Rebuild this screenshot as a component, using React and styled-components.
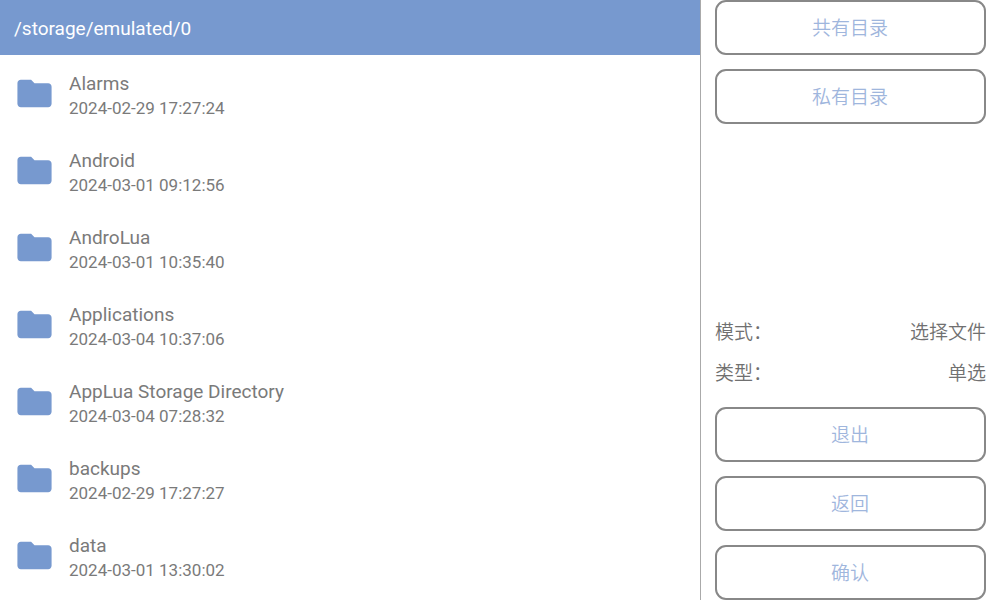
import React from "react";
import styled, { createGlobalStyle } from "styled-components";

const GlobalStyle = createGlobalStyle`
  * { box-sizing: border-box; }
  body { margin: 0; background: #fff; font-family: Roboto, "Noto Sans CJK SC", sans-serif; }
`;

const Screen = styled.div`
  display: grid;
  grid-template-columns: 7fr 3fr;
  height: 100vh;
  overflow: hidden;
`;

const Browser = styled.main`
  min-width: 0;
  overflow: hidden;
`;

const PathBar = styled.header`
  display: flex;
  align-items: center;
  height: 55px;
  padding: 2px 14px 0;
  background: #7799cf;
  color: #fff;
  font-size: 19px;
`;

const FileList = styled.ul`
  margin: 0;
  padding: 0;
  list-style: none;
`;

const FileRow = styled.li`
  display: flex;
  align-items: center;
  gap: 14px;
  height: 77px;
  padding: 0 14px;
`;

const FolderIcon = styled.svg`
  flex: none;
  width: 41px;
  height: 41px;
  fill: #7799cf;
`;

const FileText = styled.div`
  padding-top: 4px;
  color: #7a7a7a;
`;

const FileName = styled.div`
  font-size: 19px;
  line-height: 25px;
`;

const FileDate = styled.div`
  font-size: 17px;
  line-height: 24px;
`;

const Sidebar = styled.aside`
  display: flex;
  flex-direction: column;
  justify-content: space-between;
  border-left: 1px solid #aaa;
  padding: 0 14px;
`;

const Group = styled.div`
  display: flex;
  flex-direction: column;
  gap: 14px;
`;

const ActionButton = styled.button`
  height: 55px;
  padding: 0 1px 2px 0;
  border: 2px solid #888;
  border-radius: 11px;
  background: #fff;
  color: #9fb6dd;
  font: inherit;
  font-size: 19px;
  font-weight: 350;
`;

const Settings = styled.dl`
  margin: 0;
`;

const Setting = styled.div`
  display: flex;
  justify-content: space-between;
  align-items: center;
  height: 41px;
  padding-top: 2px;
  color: #707070;
  font-size: 19px;
  font-weight: 350;
  line-height: 28px;

  dd { margin: 0; }
`;

const folders = [
  ["Alarms", "2024-02-29 17:27:24"],
  ["Android", "2024-03-01 09:12:56"],
  ["AndroLua", "2024-03-01 10:35:40"],
  ["Applications", "2024-03-04 10:37:06"],
  ["AppLua Storage Directory", "2024-03-04 07:28:32"],
  ["backups", "2024-02-29 17:27:27"],
  ["data", "2024-03-01 13:30:02"],
];

export default function App() {
  return (
    <Screen>
      <GlobalStyle />
      <Browser>
        <PathBar>/storage/emulated/0</PathBar>
        <FileList>
          {folders.map(([name, date]) => (
            <FileRow key={name}>
              <FolderIcon viewBox="0 0 24 24" aria-hidden="true">
                <path d="M10 4H4c-1.100 0-1.990.9-1.990 2L2 18c0 1.100.9 2 2 2h16c1.100 0 2-.9 2-2V8c0-1.100-.9-2-2-2h-8l-2-2z" />
              </FolderIcon>
              <FileText>
                <FileName>{name}</FileName>
                <FileDate>{date}</FileDate>
              </FileText>
            </FileRow>
          ))}
        </FileList>
      </Browser>
      <Sidebar>
        <Group>
          <ActionButton type="button">共有目录</ActionButton>
          <ActionButton type="button">私有目录</ActionButton>
        </Group>
        <Group>
          <Settings>
            <Setting><dt>模式：</dt><dd>选择文件</dd></Setting>
            <Setting><dt>类型：</dt><dd>单选</dd></Setting>
          </Settings>
          <ActionButton type="button">退出</ActionButton>
          <ActionButton type="button">返回</ActionButton>
          <ActionButton type="button">确认</ActionButton>
        </Group>
      </Sidebar>
    </Screen>
  );
}
